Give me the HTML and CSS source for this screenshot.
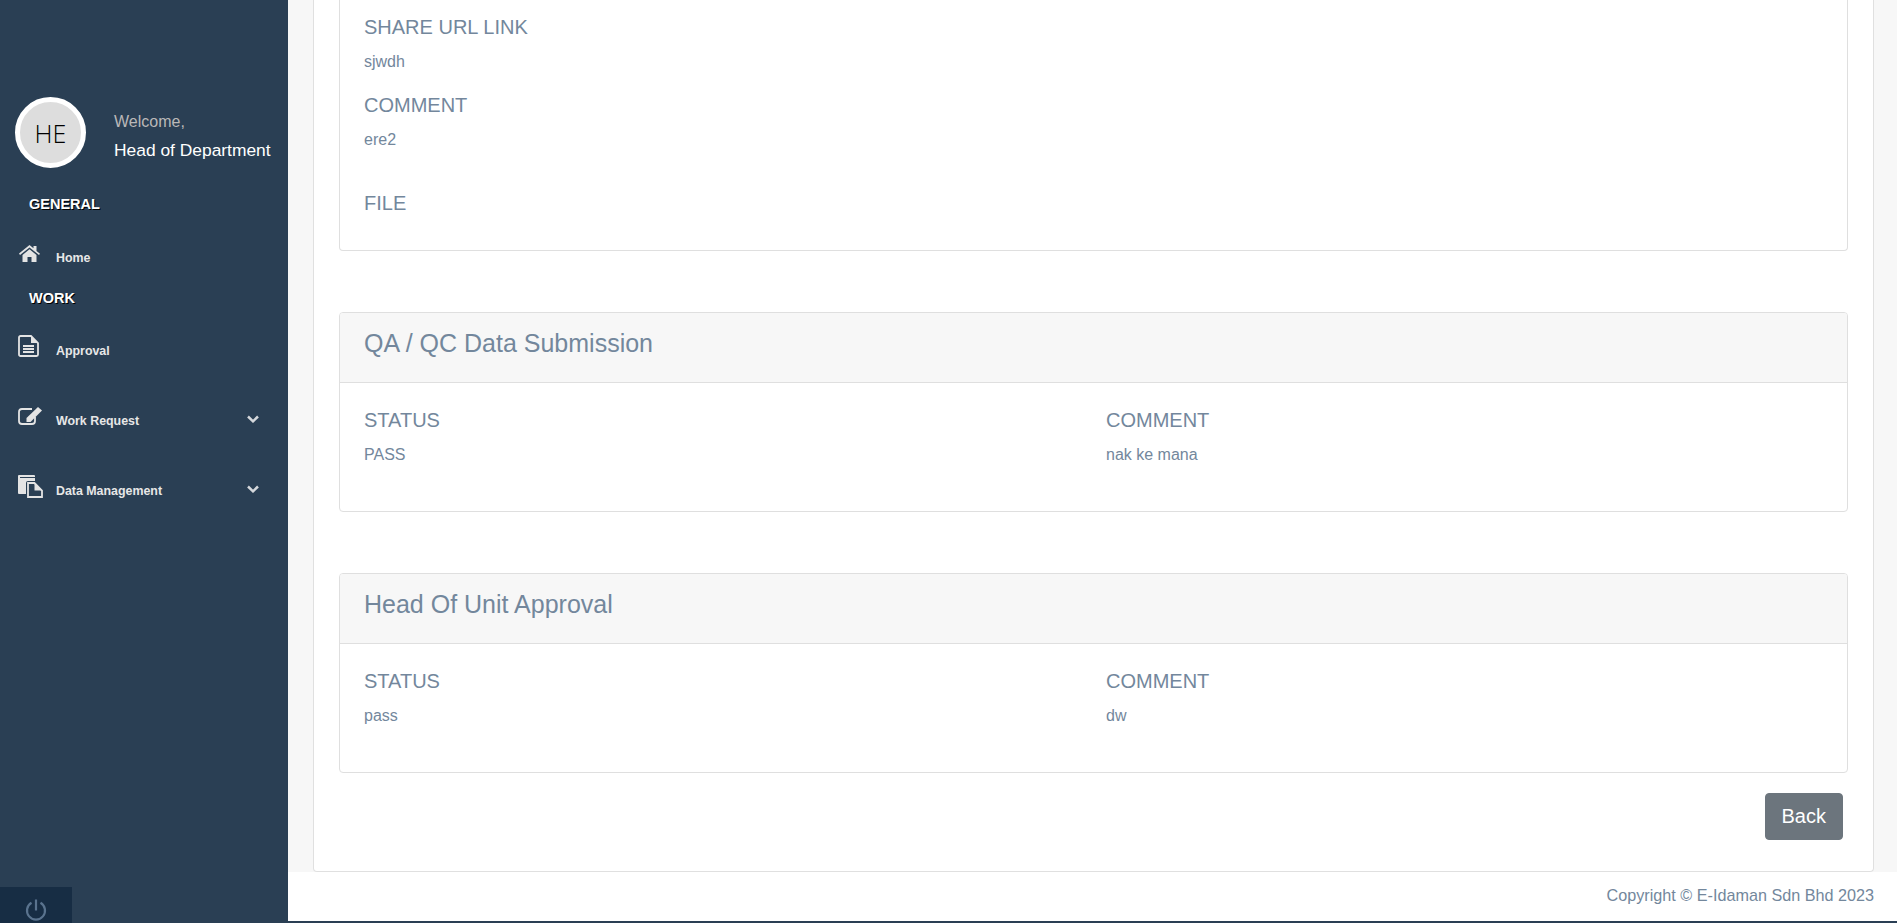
FILE: index.html
```html
<!DOCTYPE html>
<html lang="en">
<head>
    <meta charset="UTF-8">
    <meta name="viewport" content="width=device-width, initial-scale=1.0">
    <title>Work Request</title>
    <link rel="stylesheet" href="styles.css">
</head>
<body>
    <aside class="sidebar">
        <div class="profile">
            <div class="avatar">HE</div>
            <div class="profile-info">
                <span class="welcome">Welcome,</span>
                <span class="username">Head of Department</span>
            </div>
        </div>
        <h3 class="nav-title">GENERAL</h3>
        <a class="nav-item nav-home">
            <div class="nav-slot">
                <svg class="icon-home" viewBox="0 0 21 17"><path d="M0 8.500 10.500 0l4 3.200V1h3v5l3.500 2.800-1 1.200-9.500-7.500L1 10z"/><path d="M3.500 10 10.500 4.300 17.500 10v7h-5v-5h-4v5h-5z"/></svg>
            </div>
            <span>Home</span>
        </a>
        <h3 class="nav-title nav-title-work">WORK</h3>
        <a class="nav-item nav-approval">
            <div class="nav-slot">
                <svg class="icon-file" viewBox="0 0 21 22"><path class="line" d="M2.500 1H13l7 7v11.500a1.500 1.500 0 0 1-1.500 1.500h-16A1.500 1.500 0 0 1 1 19.500v-17A1.500 1.500 0 0 1 2.500 1z"/><path d="M13 1l7 7h-7z"/><path class="line" d="M5 11h11M5 14h11M5 17h11"/></svg>
            </div>
            <span>Approval</span>
        </a>
        <a class="nav-item nav-request">
            <div class="nav-slot">
                <svg class="icon-edit" viewBox="0 0 24 18"><path class="line" d="M14 2H4a3 3 0 0 0-3 3v9a3 3 0 0 0 3 3h10a3 3 0 0 0 3-3v-4"/><path d="M20 0l4 3.500-11.500 11.500H8.500v-4z"/></svg>
            </div>
            <span>Work Request</span>
            <svg class="chevron" viewBox="0 0 12 8"><path d="M1 1.500 6 6.300l5-4.800"/></svg>
        </a>
        <a class="nav-item nav-data">
            <div class="nav-slot">
                <svg class="icon-data" viewBox="0 0 25 23"><path d="M1 0h15a1 1 0 0 1 1 1v5h-7a2 2 0 0 0-2 2v11H1a1 1 0 0 1-1-1V1a1 1 0 0 1 1-1z"/><path class="cut" d="M2 2.500h15"/><path class="line" d="M10 8h6.500l7.500 7.500V22H10z"/><path d="M16.500 8 24 15.500h-7.500z"/></svg>
            </div>
            <span>Data Management</span>
            <svg class="chevron" viewBox="0 0 12 8"><path d="M1 1.500 6 6.300l5-4.800"/></svg>
        </a>
        <div class="sidebar-footer">
            <svg class="power" viewBox="0 0 24 24"><path d="M7.500 5.800a9 9 0 1 0 9 0"/><path d="M12 2.500v11"/></svg>
        </div>
    </aside>

    <div class="main">
        <div class="content">
            <div class="panel">
                <div class="card card-top">
                    <div class="card-body">
                        <h5>SHARE URL LINK</h5>
                        <p>sjwdh</p>
                        <h5>COMMENT</h5>
                        <p>ere2</p>
                        <h5 class="file-label">FILE</h5>
                    </div>
                </div>

                <div class="card">
                    <h4 class="card-header">QA / QC Data Submission</h4>
                    <div class="card-body row">
                        <div>
                            <h5>STATUS</h5>
                            <p>PASS</p>
                        </div>
                        <div>
                            <h5>COMMENT</h5>
                            <p>nak ke mana</p>
                        </div>
                    </div>
                </div>

                <div class="card">
                    <h4 class="card-header">Head Of Unit Approval</h4>
                    <div class="card-body row">
                        <div>
                            <h5>STATUS</h5>
                            <p>pass</p>
                        </div>
                        <div>
                            <h5>COMMENT</h5>
                            <p>dw</p>
                        </div>
                    </div>
                </div>

                <div class="actions">
                    <button class="btn-back">Back</button>
                </div>
            </div>
        </div>
        <footer class="footer">Copyright © E-Idaman Sdn Bhd 2023</footer>
    </div>
</body>
</html>
```

FILE: styles.css
```css
* {
    box-sizing: border-box;
}
body {
    margin: 0;
    height: 923px;
    overflow: hidden;
    display: flex;
    background-color: #2a3f54;
    font-family: "Liberation Sans", Arial, sans-serif;
    color: #73879c;
}
h3, h4, h5, p {
    margin: 0;
    font-weight: 400;
}

/* sidebar */
.sidebar {
    position: relative;
    width: 288px;
    flex-shrink: 0;
    padding-top: 97px;
    background-color: #2a3f54;
    color: #fff;
}
.profile {
    display: flex;
    padding-left: 15px;
}
.avatar {
    width: 71px;
    height: 71px;
    display: flex;
    align-items: center;
    justify-content: center;
    border: 5px solid #fff;
    border-radius: 50%;
    background-color: #ddd;
    color: #000;
    font-family: "Open Sans", sans-serif;
    font-size: 25px;
    font-weight: 350;
}
.profile-info {
    display: flex;
    flex-direction: column;
    padding: 15px 0 0 28px;
}
.welcome {
    font-size: 16px;
    line-height: 19px;
    color: #bab8b8;
}
.username {
    margin-top: 9px;
    font-size: 17.400px;
    line-height: 20px;
    white-space: nowrap;
}
.nav-title {
    margin: 28px 0 0 29px;
    font-size: 14.500px;
    line-height: 16px;
    font-weight: 700;
    text-shadow: 1px 1px #000;
}
.nav-title-work {
    margin-top: 25px;
}
.nav-item {
    display: flex;
    align-items: center;
    height: 24px;
    padding-left: 18px;
    font-size: 12.400px;
    font-weight: 700;
    color: #e7e7e7;
}
.nav-item span {
    padding-top: 9px;
}
.nav-slot {
    width: 38px;
    display: flex;
    align-items: center;
    flex-shrink: 0;
}
.nav-slot svg {
    display: block;
    fill: #e4e4e4;
}
.nav-slot .line {
    fill: none;
    stroke: #e4e4e4;
    stroke-width: 1.800;
}
.nav-slot .cut {
    fill: none;
    stroke: #2a3f54;
    stroke-width: 1;
}
.icon-home {
    width: 21px;
    height: 17px;
    margin-left: 1px;
}
.icon-file {
    width: 21px;
    height: 22px;
}
.icon-edit {
    width: 24px;
    height: 18px;
}
.icon-data {
    width: 25px;
    height: 23px;
}
.chevron {
    position: absolute;
    left: 247px;
    width: 12px;
    height: 8px;
    margin-top: 6px;
    fill: none;
    stroke: #d5d8dc;
    stroke-width: 2.500;
}
.nav-home {
    margin-top: 29px;
}
.nav-approval {
    margin-top: 28px;
}
.nav-request {
    margin-top: 46px;
}
.nav-data {
    margin-top: 46px;
}
.sidebar-footer {
    position: absolute;
    left: 0;
    bottom: 0;
    width: 72px;
    height: 36px;
    display: flex;
    align-items: center;
    justify-content: center;
    background-color: #172d44;
}
.power {
    width: 24px;
    height: 24px;
    margin-top: 7px;
    fill: none;
    stroke: #5a738e;
    stroke-width: 2.200;
}

/* main column */
.main {
    flex: 1;
    height: 921px;
    display: flex;
    flex-direction: column;
    justify-content: flex-end;
    overflow: hidden;
    background-color: #fff;
}
.content {
    flex-shrink: 0;
    padding: 0 23px 0 25px;
    background-color: #f7f7f7;
}
.panel {
    padding: 0 25px 31px;
    background-color: #fff;
    border: 1px solid #e0e0e0;
    border-top: none;
    border-radius: 0 0 4px 4px;
}
.card {
    margin-top: 61px;
    border: 1px solid #dfdfdf;
    border-radius: 4px;
    background-color: #fff;
}
.card-top {
    margin-top: 0;
    border-top: none;
    border-radius: 0 0 4px 4px;
}
.card-header {
    height: 70px;
    padding: 0 24px;
    line-height: 61px;
    font-size: 25px;
    background-color: #f7f7f7;
    border-bottom: 1px solid #dfdfdf;
    border-radius: 3px 3px 0 0;
}
.card-body {
    padding: 25px 24px;
}
.card-top .card-body {
    padding-top: 30px;
    padding-bottom: 35px;
}
.row {
    display: grid;
    grid-template-columns: 742px 1fr;
    height: 128px;
}
h5 {
    font-size: 20px;
    line-height: 24px;
}
p {
    margin-top: 11px;
    margin-bottom: 19px;
    font-size: 16px;
    line-height: 24px;
}
.file-label {
    margin-top: 39px;
}

.actions {
    display: flex;
    justify-content: flex-end;
    margin-top: 20px;
    padding-right: 5px;
}
.btn-back {
    height: 47px;
    padding: 0 16px;
    background-color: #6c757d;
    color: #fff;
    border: 1px solid #6c757d;
    border-radius: 4px;
    font-family: inherit;
    font-size: 20px;
}

.footer {
    flex-shrink: 0;
    height: 49px;
    padding: 14px 23px 0 0;
    background-color: #fff;
    text-align: right;
    font-size: 16.200px;
    line-height: 19px;
}
```
